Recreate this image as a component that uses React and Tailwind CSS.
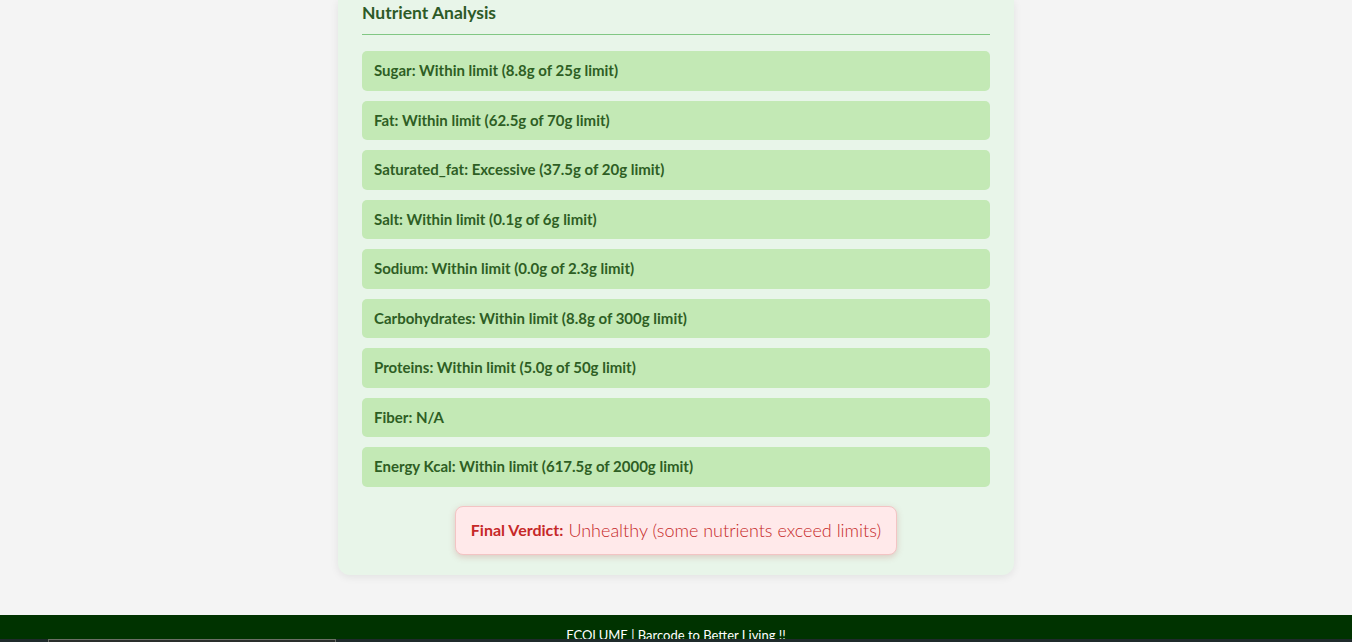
import React from "react";

const items = [
  "Sugar: Within limit (8.8g of 25g limit)",
  "Fat: Within limit (62.5g of 70g limit)",
  "Saturated_fat: Excessive (37.5g of 20g limit)",
  "Salt: Within limit (0.1g of 6g limit)",
  "Sodium: Within limit (0.0g of 2.3g limit)",
  "Carbohydrates: Within limit (8.8g of 300g limit)",
  "Proteins: Within limit (5.0g of 50g limit)",
  "Fiber: N/A",
  "Energy Kcal: Within limit (617.5g of 2000g limit)",
];

export default function App() {
  return (
    <div
      className="relative h-[642px] overflow-hidden bg-[#f4f4f4]"
      style={{ fontFamily: "Lato, 'Open Sans', sans-serif" }}
    >
      <div className="flex justify-center">
        <div className="w-[676px] rounded-b-xl bg-[#e8f5e9] px-6 pb-5 pt-px shadow-[0_2px_8px_rgba(0,0,0,0.08)]">
          <h2 className="border-b border-[#81c784] pb-[9px] text-[17.5px] font-bold leading-6 text-[#2d5a27]">
            Nutrient Analysis
          </h2>
          <div className="mt-4 flex flex-col gap-[10px]">
            {items.map((t) => (
              <div
                key={t}
                className="flex h-[39.5px] items-center rounded-[5px] bg-[#c3e9b5] px-3 pb-px text-[15px] font-bold text-[#2e5e24]"
              >
                {t}
              </div>
            ))}
          </div>
          <div className="mt-[19px] flex justify-center">
            <div className="flex h-[49px] items-center gap-[5px] rounded-lg border border-[#f3c4c4] bg-[#ffe9ea] px-[15px] shadow-[0_2px_6px_rgba(180,80,80,0.25)]">
              <span className="text-[16px] font-bold text-[#c62828]">Final Verdict:</span>
              <span className="text-[18px] font-light text-[#c62828]">
                Unhealthy (some nutrients exceed limits)
              </span>
            </div>
          </div>
        </div>
      </div>
      <footer className="mt-10 bg-[#003300] pb-4 pt-[11px] text-center text-[13px] text-white">
        ECOLUME | Barcode to Better Living !!
      </footer>
      <div className="absolute bottom-0 left-0 right-0 h-[3px] bg-[#1f2a2b]">
        <div className="ml-[48px] h-[3px] w-[288px] border-x border-t border-[#6b6e66] bg-[#2a2f2c]" />
      </div>
    </div>
  );
}
